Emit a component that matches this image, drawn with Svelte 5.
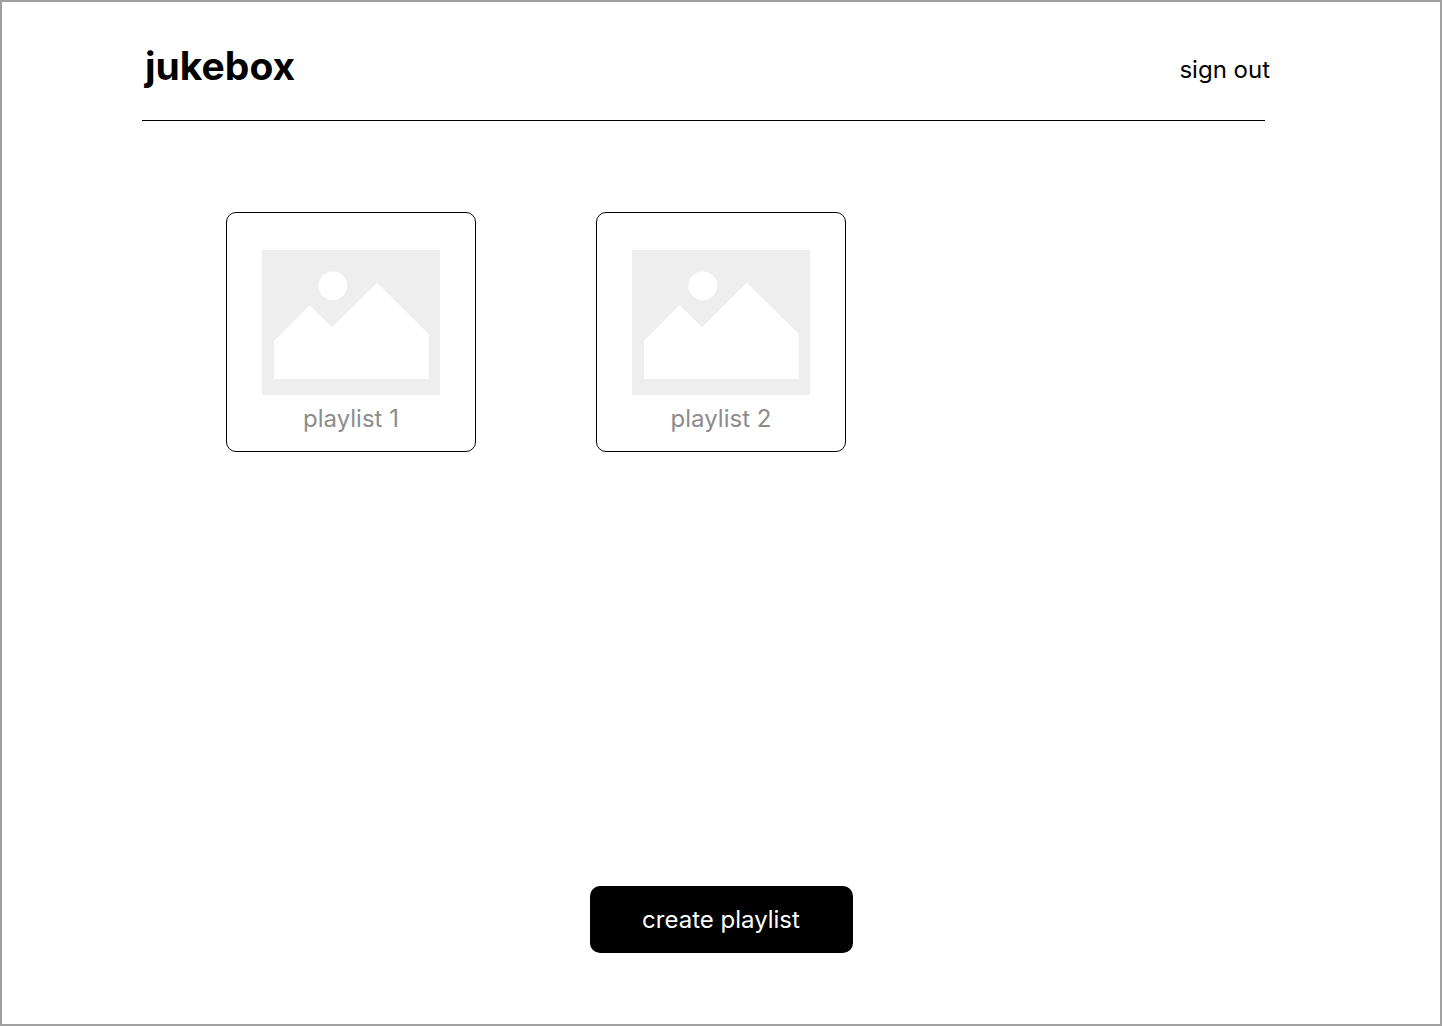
<script>
  const playlists = ['playlist 1', 'playlist 2'];
</script>

<div class="page">
  <header>
    <h1>jukebox</h1>
    <button class="sign-out" type="button">sign out</button>
  </header>
  <hr />
  <main>
    {#each playlists as name}
      <a class="card" href="#{name.replace(' ', '-')}">
        <svg viewBox="0 0 178 145" aria-hidden="true">
          <path fill="#eee" d="M0 0H178V145H0Z" />
          <circle cx="70.8" cy="35.8" r="14.4" fill="#fff" />
          <path fill="#fff" d="M12 91L47.700 55.300L70 77.300L114.800 32.800L166.700 84V129H12Z" />
        </svg>
        <span>{name}</span>
      </a>
    {/each}
  </main>
  <footer>
    <button class="create" type="button">create playlist</button>
  </footer>
</div>

<style>
  :global(body) {
    background: #fff;
  }
  .page {
    box-sizing: border-box;
    min-height: 100vh;
    display: flex;
    flex-direction: column;
    border: 2px solid #a0a0a0;
    font-family: Inter, sans-serif;
    font-size: 24px;
    line-height: 30px;
    color: #000;
  }
  header {
    display: flex;
    justify-content: space-between;
    align-items: center;
    padding: 39px 170px 29px 143px;
  }
  h1 {
    margin: 0;
    font-size: 39px;
    line-height: 50px;
    font-weight: 700;
  }
  button {
    border: 0;
    font: inherit;
    cursor: pointer;
  }
  .sign-out {
    padding: 8px 0 0;
    background: none;
    color: #000;
  }
  hr {
    width: auto;
    height: 1px;
    margin: 0 175px 0 140px;
    border: 0;
    background: #000;
  }
  main {
    flex: 1;
    display: flex;
    flex-wrap: wrap;
    align-content: flex-start;
    gap: 60px 120px;
    padding: 91px 175px 60px 224px;
  }
  .card {
    box-sizing: border-box;
    width: 250px;
    display: flex;
    flex-direction: column;
    align-items: center;
    gap: 9px;
    padding: 37px 35px 17px;
    border: 1px solid #000;
    border-radius: 10px;
    color: #8c8c8c;
    text-decoration: none;
  }
  svg {
    display: block;
    width: 178px;
  }
  footer {
    display: flex;
    justify-content: center;
    padding-bottom: 71px;
  }
  .create {
    min-width: 263px;
    padding: 19px 52px 18px;
    border-radius: 10px;
    background: #000;
    color: #fff;
  }
</style>
